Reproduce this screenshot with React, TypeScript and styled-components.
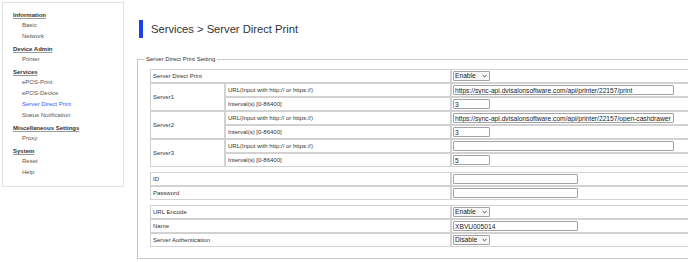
import React from "react";
import styled, { createGlobalStyle } from "styled-components";

interface MenuGroup {
  title: string;
  items: string[];
}

const menu: MenuGroup[] = [
  { title: "Information", items: ["Basic", "Network"] },
  { title: "Device Admin", items: ["Printer"] },
  { title: "Services", items: ["ePOS-Print", "ePOS-Device", "Server Direct Print", "Status Notification"] },
  { title: "Miscellaneous Settings", items: ["Proxy"] },
  { title: "System", items: ["Reset", "Help"] },
];

const servers = [
  { name: "Server1", url: "https://sync-api.dvisalonsoftware.com/api/printer/22157/print", interval: "3" },
  { name: "Server2", url: "https://sync-api.dvisalonsoftware.com/api/printer/22157/open-cashdrawer", interval: "3" },
  { name: "Server3", url: "", interval: "5" },
];

const Chevron = () => (
  <svg width="5" height="4" viewBox="0 0 5 4">
    <path d="M0.6 1 L2.5 2.9 L4.4 1" fill="none" stroke="#333" strokeWidth="0.9" />
  </svg>
);

const Select = ({ value, options }: { value: string; options: string[] }) => (
  <SelectWrap>
    <SelectField defaultValue={value}>
      {options.map((o) => (
        <option key={o}>{o}</option>
      ))}
    </SelectField>
    <Chevron />
  </SelectWrap>
);

const App = (): JSX.Element => {
  return (
    <>
      <GlobalStyle />
      <Page>
        <Sidebar>
          {menu.map((group) => (
            <Group key={group.title}>
              <GroupTitle>{group.title}</GroupTitle>
              {group.items.map((item) => (
                <MenuItem key={item} $active={item === "Server Direct Print"}>
                  {item}
                </MenuItem>
              ))}
            </Group>
          ))}
        </Sidebar>

        <Main>
          <TitleRow>
            <TitleBar />
            <Title>Services &gt; Server Direct Print</Title>
          </TitleRow>

          <Fieldset>
            <Legend>Server Direct Print Setting</Legend>

            <Table>
              <colgroup>
                <col style={{ width: 75 }} />
                <col style={{ width: 226 }} />
                <col />
              </colgroup>
              <tbody>
                <tr>
                  <Cell colSpan={2}>Server Direct Print</Cell>
                  <ValueCell>
                    <Select value="Enable" options={["Enable", "Disable"]} />
                  </ValueCell>
                </tr>
                {servers.map((s) => (
                  <React.Fragment key={s.name}>
                    <tr>
                      <Cell rowSpan={2}>{s.name}</Cell>
                      <Cell>URL(Input with http:// or https://)</Cell>
                      <ValueCell>
                        <TextInput $w={221} defaultValue={s.url} />
                      </ValueCell>
                    </tr>
                    <tr>
                      <Cell>Interval(s) [0-86400]</Cell>
                      <ValueCell>
                        <TextInput $w={37} defaultValue={s.interval} />
                      </ValueCell>
                    </tr>
                  </React.Fragment>
                ))}
              </tbody>
            </Table>

            <Table>
              <colgroup>
                <col style={{ width: 301 }} />
                <col />
              </colgroup>
              <tbody>
                <tr>
                  <Cell>ID</Cell>
                  <ValueCell>
                    <TextInput $w={125} />
                  </ValueCell>
                </tr>
                <tr>
                  <Cell>Password</Cell>
                  <ValueCell>
                    <TextInput $w={125} type="password" />
                  </ValueCell>
                </tr>
              </tbody>
            </Table>

            <Table>
              <colgroup>
                <col style={{ width: 301 }} />
                <col />
              </colgroup>
              <tbody>
                <tr>
                  <Cell>URL Encode</Cell>
                  <ValueCell>
                    <Select value="Enable" options={["Enable", "Disable"]} />
                  </ValueCell>
                </tr>
                <tr>
                  <Cell>Name</Cell>
                  <ValueCell>
                    <TextInput $w={125} defaultValue="XBVU005014" />
                  </ValueCell>
                </tr>
                <tr>
                  <Cell>Server Authentication</Cell>
                  <ValueCell>
                    <Select value="Disable" options={["Enable", "Disable"]} />
                  </ValueCell>
                </tr>
              </tbody>
            </Table>
          </Fieldset>
        </Main>
      </Page>
    </>
  );
};

const GlobalStyle = createGlobalStyle`
  html, body {
    margin: 0;
    padding: 0;
    background: #ffffff;
    overflow: hidden;
  }

  body {
    font-family: "Liberation Sans", Arial, sans-serif;
    color: #333333;
  }
`;

const Page = styled.div`
  display: flex;
  align-items: flex-start;
  width: 800px;
`;

// LEFT MENU

const Sidebar = styled.nav`
  width: 122px;
  height: 185px;
  margin: 2px 0 0 2px;
  padding: 8px 0 0 10px;
  box-sizing: border-box;
  border: 1px solid #e2e2e2;
  background: #ffffff;
`;

const Group = styled.div`
  & + & {
    margin-top: 3.5px;
  }
`;

const GroupTitle = styled.div`
  font-size: 6px;
  line-height: 9px;
  font-weight: bold;
  color: #333333;
  text-decoration: underline;
  text-decoration-color: #9a9a9a;
  text-underline-offset: 1px;
`;

const MenuItem = styled.div<{ $active?: boolean }>`
  padding-left: 9px;
  font-size: 6px;
  line-height: 10.8px;
  color: ${(p) => (p.$active ? "#3060ff" : "#555555")};
`;

// RIGHT PART

const Main = styled.main`
  margin-left: 13px;
`;

const TitleRow = styled.div`
  display: flex;
  align-items: center;
  margin-top: 20px;
  padding-left: 2px;
`;

const TitleBar = styled.div`
  width: 4px;
  height: 18px;
  background: #1f3fe8;
`;

const Title = styled.h1`
  margin: 0 0 0 8px;
  font-size: 11.2px;
  font-weight: normal;
  line-height: 18px;
  color: #333333;
`;

const Fieldset = styled.fieldset`
  width: 580px;
  min-width: 0;
  margin: 17px 0 0 0;
  padding: 6px 12px 11px 12px;
  border: 1px solid #c9c9c9;
`;

const Legend = styled.legend`
  margin-left: -6px;
  padding: 0 2px;
  font-size: 6px;
  line-height: 8px;
  color: #333333;
`;

const Table = styled.table`
  width: 560px;
  table-layout: fixed;
  border-collapse: separate;
  border-spacing: 0;
  font-size: 6px;
  color: #333333;

  & + & {
    margin-top: 5px;
  }
`;

const Cell = styled.td`
  height: 12px;
  padding: 0 0 0 2px;
  border: 1px solid #d2d2d2;
  line-height: 12px;
  white-space: nowrap;
  vertical-align: middle;
`;

const ValueCell = styled(Cell)`
  padding-left: 1px;
`;

const TextInput = styled.input<{ $w: number }>`
  display: block;
  width: ${(p) => p.$w}px;
  height: 10px;
  margin: 0;
  padding: 0 1px;
  box-sizing: border-box;
  border: 1px solid #a3a3a3;
  border-radius: 1px;
  font-family: "Liberation Sans", Arial, sans-serif;
  font-size: 6.67px;
  color: #222222;
  background: #ffffff;
  outline: none;
`;

const SelectWrap = styled.div`
  display: flex;
  align-items: center;
  width: 37px;
  height: 10px;
  padding: 0 2px 0 1px;
  box-sizing: border-box;
  border: 1px solid #a3a3a3;
  border-radius: 1px;
  background: #f7f7f7;
`;

const SelectField = styled.select`
  flex: 1;
  min-width: 0;
  height: 8px;
  margin: 0;
  padding: 0;
  border: none;
  appearance: none;
  background: transparent;
  font-family: "Liberation Sans", Arial, sans-serif;
  font-size: 6.67px;
  line-height: 8px;
  color: #222222;
  outline: none;
`;

export default App;
